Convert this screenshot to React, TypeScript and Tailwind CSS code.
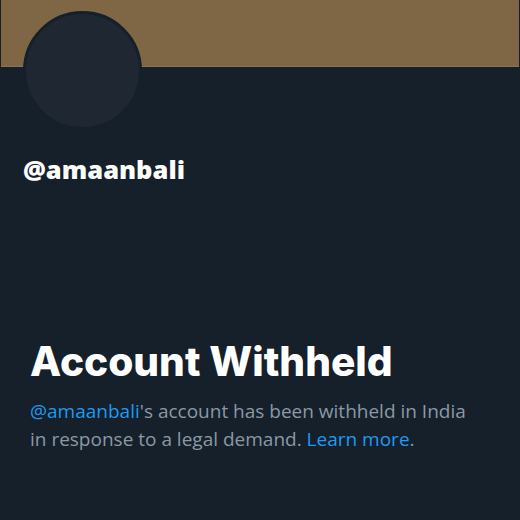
export default function App() {
  return (
    <div className="w-[520px] h-[520px] bg-[#15202b] overflow-hidden" style={{ fontFamily: '"Open Sans", "Liberation Sans", Arial, sans-serif' }}>
      <div className="relative h-[67px] mx-[1px] bg-[#7f6745] border-b border-[#8a7452]">
        <div className="absolute left-[22px] top-[11px] w-[119px] h-[119px] rounded-full bg-[#1e2732] border-[3px] border-[#15202b]" />
      </div>
      <div className="pl-[23px] pt-[86px] text-white font-extrabold text-[25.5px] leading-[32px]">@amaanbali</div>
      <div className="pl-[30px] pt-[152px]">
        <h1 className="text-white font-extrabold text-[40.6px] leading-[50px]" style={{ fontFamily: 'Inter, "Liberation Sans", sans-serif' }}>Account Withheld</h1>
        <p className="mt-[10px] text-[19px] leading-[28px] text-[#8b98a5]">
          <span className="text-[#1d9bf0]">@amaanbali</span>'s account has been withheld in India
          <br />
          in response to a legal demand. <span className="text-[#1d9bf0]">Learn more</span>.
        </p>
      </div>
    </div>
  );
}
